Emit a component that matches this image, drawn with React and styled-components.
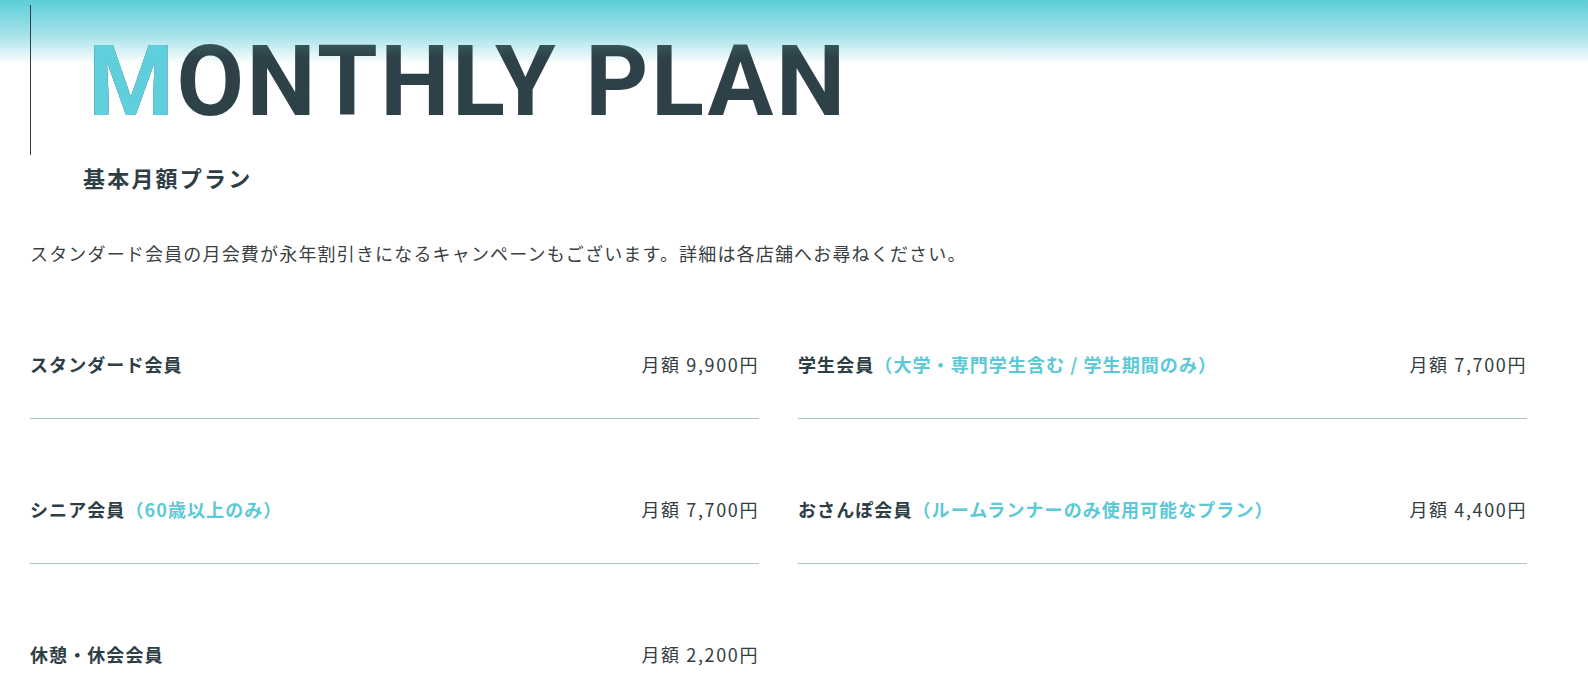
import React from "react";
import styled, { createGlobalStyle } from "styled-components";

const Global = createGlobalStyle`
  html, body { margin: 0; padding: 0; background: #ffffff; }
  body { font-family: "Noto Sans CJK JP", "Noto Sans", sans-serif; color: #333d42; }
`;

const Page = styled.div`
  min-height: 696px;
  background: linear-gradient(to bottom, #5ccdd9 0px, #a8e3ea 36px, #ffffff 64px) no-repeat;
  padding: 5px 61px 0 30px;
  box-sizing: border-box;
`;

const Hero = styled.header`
  border-left: 1px solid #2e4047;
  height: 150px;
  padding-left: 57px;
  box-sizing: border-box;
`;

const Title = styled.h1`
  margin: 0;
  padding-top: 28px;
  font-family: Roboto, "Liberation Sans", sans-serif;
  font-weight: 700;
  font-size: 98px;
  line-height: 1;
  letter-spacing: 2.6px;
  white-space: nowrap;
  background: linear-gradient(to bottom, #4a7a80 0px, #3a5a61 36px, #2f4148 52px, #2f4148 100%);
  -webkit-background-clip: text;
  background-clip: text;
  -webkit-text-fill-color: transparent;
  color: #2f4148;
`;

const Accent = styled.span`
  -webkit-text-fill-color: #5ecfdb;
  color: #5ecfdb;
`;

const SubTitle = styled.h2`
  margin: 6px 0 0 53px;
  font-size: 22px;
  font-weight: 700;
  letter-spacing: 0.1em;
  line-height: 32px;
  color: #2e3e45;
`;

const Lead = styled.p`
  margin: 46px 0 0;
  font-size: 18px;
  line-height: 28px;
  letter-spacing: 0.065em;
  color: #3a3f42;
`;

const PlanGrid = styled.div`
  display: grid;
  grid-template-columns: 1fr 1fr;
  column-gap: 39px;
  row-gap: 77px;
  margin-top: 84px;
`;

const PlanRow = styled.div`
  display: flex;
  justify-content: space-between;
  align-items: center;
  padding-bottom: 41px;
  border-bottom: ${(p) => (p.$last ? "none" : "1px solid #a9c3cb")};
`;

const PlanName = styled.span`
  font-size: 18px;
  font-weight: 700;
  line-height: 26px;
  letter-spacing: 0.06em;
  color: #2e3e45;
`;

const Note = styled.span`
  color: #5bc9d6;
`;

const Price = styled.span`
  font-size: 18px;
  line-height: 26px;
  letter-spacing: 0.09em;
  color: #333d42;
`;

const plans = [
  { name: "スタンダード会員", price: "月額 9,900円" },
  { name: "学生会員", note: "（大学・専門学生含む / 学生期間のみ）", price: "月額 7,700円" },
  { name: "シニア会員", note: "（60歳以上のみ）", price: "月額 7,700円" },
  { name: "おさんぽ会員", note: "（ルームランナーのみ使用可能なプラン）", price: "月額 4,400円" },
  { name: "休憩・休会会員", price: "月額 2,200円", last: true },
];

export default function App() {
  return (
    <>
      <Global />
      <Page>
        <Hero>
          <Title>
            <Accent>M</Accent>ONTHLY PLAN
          </Title>
        </Hero>
        <SubTitle>基本月額プラン</SubTitle>
        <Lead>
          スタンダード会員の月会費が永年割引きになるキャンペーンもございます。詳細は各店舗へお尋ねください。
        </Lead>
        <PlanGrid>
          {plans.map((p) => (
            <PlanRow key={p.name} $last={p.last}>
              <PlanName>
                {p.name}
                {p.note && <Note>{p.note}</Note>}
              </PlanName>
              <Price>{p.price}</Price>
            </PlanRow>
          ))}
        </PlanGrid>
      </Page>
    </>
  );
}
